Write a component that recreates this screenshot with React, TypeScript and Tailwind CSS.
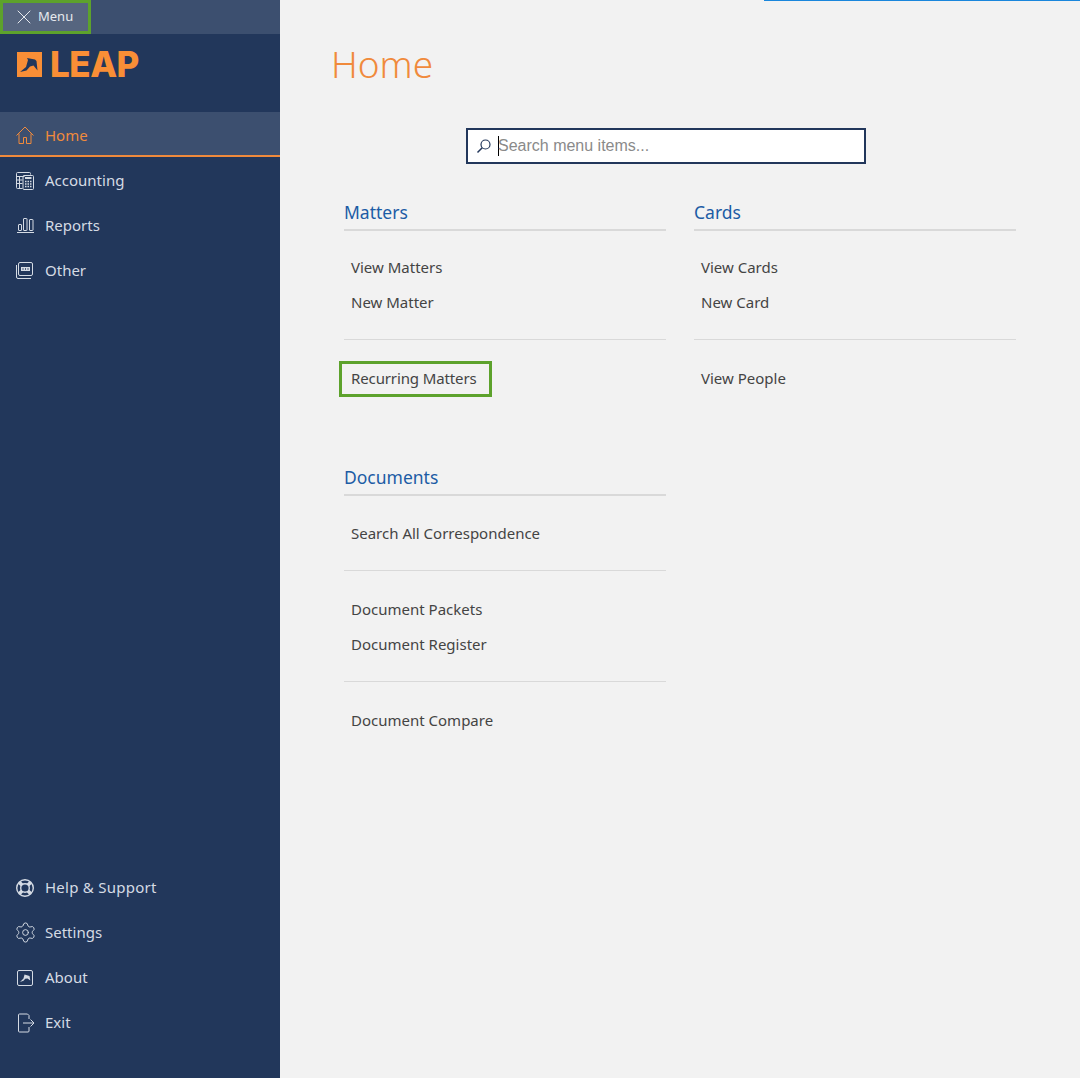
import { X, Settings } from 'lucide-react';

const HomeIcon = () => (
  <svg width="20" height="20" viewBox="0 0 20 20" fill="none" stroke="currentColor" strokeWidth="1">
    <path d="M1.500 10.500L10 2l8.500 8.500" />
    <path d="M4 8.500v10h4.500v-6h3v6H16v-10" />
  </svg>
);

const AccountingIcon = () => (
  <svg width="20" height="20" viewBox="0 0 20 20" fill="none" stroke="currentColor" strokeWidth="1">
    <path d="M15.500 3.500V2.500a1 1 0 0 0-1-1h-12a1 1 0 0 0-1 1v14a1 1 0 0 0 1 1h5" />
    <path d="M1.500 5.500h8M1.500 9h6M1.500 12.500h6M4.500 5.500v11.500" />
    <rect x="8" y="4.500" width="10.500" height="14" rx="1" />
    <path d="M10 7h6.500" strokeWidth="2" />
    <path d="M10 10.500h1.500M12.500 10.500h1.500M15 10.500h1.500M10 13h1.500M12.500 13h1.500M15 13h1.500M10 15.500h1.500M12.500 15.500h1.500M15 15.500h1.500" strokeWidth="1.500" />
  </svg>
);

const ReportsIcon = () => (
  <svg width="20" height="20" viewBox="0 0 20 20" fill="none" stroke="currentColor" strokeWidth="1">
    <path d="M2 16.500h17" />
    <rect x="3.500" y="8.500" width="3" height="6" rx="0.500" />
    <rect x="8.500" y="2.500" width="3.500" height="12" rx="0.500" />
    <rect x="14.500" y="3.500" width="3.500" height="11" rx="0.500" />
  </svg>
);

const OtherIcon = () => (
  <svg width="20" height="20" viewBox="0 0 20 20" fill="none" stroke="currentColor" strokeWidth="1">
    <rect x="3.500" y="1.500" width="14" height="13" rx="1.500" />
    <path d="M1.500 4v12a1.500 1.500 0 0 0 1.500 1.500h13" />
    <rect x="6" y="6" width="9" height="4" fill="currentColor" stroke="none" />
    <path d="M7.500 8h1M10 8h1M12.500 8h1" stroke="#22375b" strokeWidth="1.500" />
  </svg>
);

const AboutIcon = () => (
  <svg width="20" height="20" viewBox="0 0 20 20" fill="none" stroke="currentColor" strokeWidth="1">
    <rect x="2.500" y="2.500" width="15" height="15" rx="1.500" />
    <path d="M5 14l3.500-3.500 1-4 5 1.500.8 4.500-2.800-2-2.300.3-1.700 2z" fill="currentColor" stroke="none" />
  </svg>
);

const HelpIcon = () => (
  <svg width="20" height="20" viewBox="0 0 20 20" fill="none" stroke="currentColor">
    <circle cx="10" cy="10" r="8.300" strokeWidth="1.400" />
    <circle cx="10" cy="10" r="4.300" strokeWidth="1.400" />
    <path d="M4.200 4.200l2.800 2.800M15.800 4.200l-2.800 2.800M4.200 15.800l2.800-2.800M15.800 15.800l-2.800-2.800" strokeWidth="3.500" />
  </svg>
);

const ExitIcon = () => (
  <svg width="20" height="20" viewBox="0 0 20 20" fill="none" stroke="currentColor" strokeWidth="1">
    <path d="M14 6V2.500L12.500 1h-8a1 1 0 0 0-1 1v16a1 1 0 0 0 1 1H13a1 1 0 0 0 1-1v-4" />
    <path d="M8 10h11M15.500 6.500L19 10l-3.500 3.500" />
  </svg>
);

const SearchIcon = () => (
  <svg width="16" height="16" viewBox="0 0 16 16" fill="none" stroke="#22375b" className="shrink-0">
    <circle cx="9.500" cy="6.500" r="4.500" strokeWidth="1.200" />
    <path d="M6.200 9.800L1.500 14.500" strokeWidth="1.500" />
  </svg>
);

const LeapLogo = () => (
  <div className="flex items-center gap-[8px]">
    <svg width="25" height="25" viewBox="0 0 25 25">
      <rect width="25" height="25" fill="#f98e36" />
      <path d="M3 20l6-5 2-7-1-2 8 1.500 1.500 1.500 1 9.500-4-5-3.500 1-3.500 4z" fill="#22375b" />
    </svg>
    <span className="text-[35px] leading-[25px] font-extrabold tracking-[-0.5px] text-[#f98e36] [font-family:Inter,sans-serif]">LEAP</span>
  </div>
);

const topNav = [
  { label: 'Home', icon: <HomeIcon />, active: true },
  { label: 'Accounting', icon: <AccountingIcon /> },
  { label: 'Reports', icon: <ReportsIcon /> },
  { label: 'Other', icon: <OtherIcon /> },
];

const bottomNav = [
  { label: 'Help & Support', icon: <HelpIcon /> },
  { label: 'Settings', icon: <Settings size={23} strokeWidth={1} className="shrink-0" /> },
  { label: 'About', icon: <AboutIcon /> },
  { label: 'Exit', icon: <ExitIcon /> },
];

function NavItem({ label, icon, active, nudge }: { label: string; icon: any; active?: boolean; nudge?: boolean }) {
  return (
    <div
      className={`flex h-[45px] items-center gap-[10px] pl-[15px] text-[15px] ${active ? 'pt-[3px]' : nudge ? 'pt-[2px]' : ''} ${
        active ? 'border-b-2 border-[#f08a3c] bg-[#3c4f6f] text-[#f08a3c]' : 'text-[#d5dbe4]'
      }`}
    >
      <span className="flex h-5 w-5 items-center justify-center">{icon}</span>
      <span className={label === 'Help & Support' ? 'tracking-[0.25px]' : ''}>{label}</span>
    </div>
  );
}

function MenuLink({ label, focused }: { label: string; focused?: boolean }) {
  if (focused) {
    return (
      <div className="-ml-[5px] flex h-[36px] w-[153px] items-center border-[3px] border-[#5da22c] pb-[2px] pl-[9px] text-[15px] tracking-[-0.12px] text-[#444]">
        {label}
      </div>
    );
  }
  return <div className="flex h-[35px] items-center px-[7px] text-[15px] text-[#444]">{label}</div>;
}

function Section({ title, groups, focus, extraTop }: { title: string; groups: string[][]; focus?: string; extraTop?: boolean }) {
  return (
    <section>
      <h2 className="h-[34px] border-b-2 border-[#d9d9d9] text-[17.5px] leading-[30px] text-[#1c5ca5]">{title}</h2>
      <div className="divide-y divide-[#d9d9d9]">
        {groups.map((items, i) => (
          <div key={i} className={`pb-[19px] ${i > 0 ? 'pt-[21px]' : extraTop ? 'pt-[20px]' : 'pt-[19px]'}`}>
            {items.map((item) => (
              <MenuLink key={item} label={item} focused={item === focus} />
            ))}
          </div>
        ))}
      </div>
    </section>
  );
}

export default function App() {
  return (
    <div className="relative flex min-h-[1078px] bg-[#f2f2f2] [font-family:'Noto_Sans',sans-serif]">
      <aside className="flex w-[280px] shrink-0 flex-col bg-[#22375b]">
        <div className="h-[34px] bg-[#3c4f6f]">
          <button className="flex h-[34px] w-[91px] items-center gap-[2px] border-[3px] border-[#5da22c] bg-[#56657f] pl-[9px] text-[13px] text-[#e6e9ee]">
            <X size={24} strokeWidth={1} className="shrink-0" />
            Menu
          </button>
        </div>
        <div className="h-[78px] pl-[17px] pt-[18px]">
          <LeapLogo />
        </div>
        <nav>
          {topNav.map((n) => (
            <NavItem key={n.label} {...n} nudge />
          ))}
        </nav>
        <nav className="mt-auto pb-[33px]">
          {bottomNav.map((n) => (
            <NavItem key={n.label} {...n} />
          ))}
        </nav>
      </aside>

      <main className="flex-1">
        <div className="absolute right-0 top-0 h-px w-[316px] bg-[#1a86dc]" />
        <h1 className="ml-[51px] h-[92px] pt-[37px] text-[37px] leading-[54px] font-light text-[#f08a3c]">Home</h1>
        <div className="mt-[36px] ml-[186px] flex h-[36px] w-[400px] items-center border-2 border-[#22375b] bg-white pl-[8px]">
          <SearchIcon />
          <span className="ml-[6px] h-[20px] w-px bg-black" />
          <span className="-ml-px text-[16px] text-[#8a8a8a] [font-family:'Liberation_Sans',sans-serif]">Search menu items...</span>
        </div>
        <div className="mt-[33px] ml-[64px] grid w-[672px] grid-cols-2 items-start gap-x-[28px] gap-y-[46px]">
          <Section title="Matters" groups={[['View Matters', 'New Matter'], ['Recurring Matters']]} focus="Recurring Matters" />
          <Section title="Cards" groups={[['View Cards', 'New Card'], ['View People']]} />
          <Section
            title="Documents"
            extraTop
            groups={[['Search All Correspondence'], ['Document Packets', 'Document Register'], ['Document Compare']]}
          />
        </div>
      </main>
    </div>
  );
}
